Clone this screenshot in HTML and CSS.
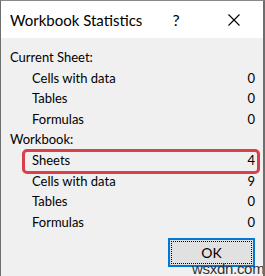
FILE: index.html
```html
<!DOCTYPE html>
<html lang="en">
<head>
  <meta charset="UTF-8">
  <title>Workbook Statistics</title>
  <link rel="stylesheet" href="styles.css">
</head>
<body>
  <div class="window">
    <div class="titlebar">
      <span class="title">Workbook Statistics</span>
      <div class="title-buttons">
        <span class="title-btn help">?</span>
        <span class="title-btn close">
          <svg width="12" height="12" viewBox="0 0 12 12">
            <path d="M0.5 0.5 L11.5 11.5 M11.5 0.5 L0.5 11.5" stroke="#000" stroke-width="1.1" fill="none"/>
          </svg>
        </span>
      </div>
    </div>

    <div class="content">
      <div class="group-label">Current Sheet:</div>
      <div class="stat"><span>Cells with data</span><span>0</span></div>
      <div class="stat"><span>Tables</span><span>0</span></div>
      <div class="stat"><span>Formulas</span><span>0</span></div>

      <div class="group-label">Workbook:</div>
      <div class="stat marked"><span>Sheets</span><span>4</span><i class="mark"></i></div>
      <div class="stat"><span>Cells with data</span><span>9</span></div>
      <div class="stat"><span>Tables</span><span>0</span></div>
      <div class="stat"><span>Formulas</span><span>0</span></div>

      <div class="actions">
        <button class="btn-ok">OK</button>
      </div>
    </div>
    <div class="watermark">wsxdn.com</div>
  </div>
</body>
</html>
```

FILE: styles.css
```css
* {
  box-sizing: border-box;
  margin: 0;
  padding: 0;
}

body {
  font-family: Lato, "Noto Sans", sans-serif;
  color: #000;
  background: #fff;
}

.window {
  position: relative;
  width: 265px;
  height: 276px;
  border-top: 1px solid #8a8a8a;
  border-left: 1px solid #6e6e6e;
  border-right: 2px solid #6e6e6e;
  background: #f0f0f0;
  overflow: hidden;
}

.titlebar {
  display: flex;
  align-items: center;
  justify-content: space-between;
  height: 37px;
  background: #fff;
}

.title {
  padding-left: 9px;
  font-size: 15px;
  white-space: nowrap;
}

.title-buttons {
  display: flex;
  height: 100%;
}

.title-btn {
  display: flex;
  align-items: center;
  justify-content: center;
  width: 58px;
  height: 100%;
}

.help {
  font-size: 16px;
}

.content {
  padding: 9px 8px 0 9px;
  font-size: 13px;
  line-height: 20.6px;
}

.stat {
  display: flex;
  justify-content: space-between;
  padding-left: 22px;
}

.marked {
  position: relative;
}

.mark {
  position: absolute;
  top: -1px;
  bottom: -3px;
  left: 12px;
  right: -5px;
  border: 3px solid #d9414a;
  border-radius: 5px;
}

.actions {
  display: flex;
  justify-content: flex-end;
  margin-top: 6px;
}

.btn-ok {
  width: 87px;
  height: 29px;
  font-family: inherit;
  font-size: 14px;
  background: #e1e1e1;
  border: 2px solid #0078d7;
  outline: 1px dotted #000;
  outline-offset: -4px;
  color: #000;
}

.watermark {
  position: absolute;
  left: 191px;
  top: 259px;
  font-family: "Liberation Sans", sans-serif;
  font-size: 15px;
  color: #333;
  letter-spacing: -0.3px;
}
```
